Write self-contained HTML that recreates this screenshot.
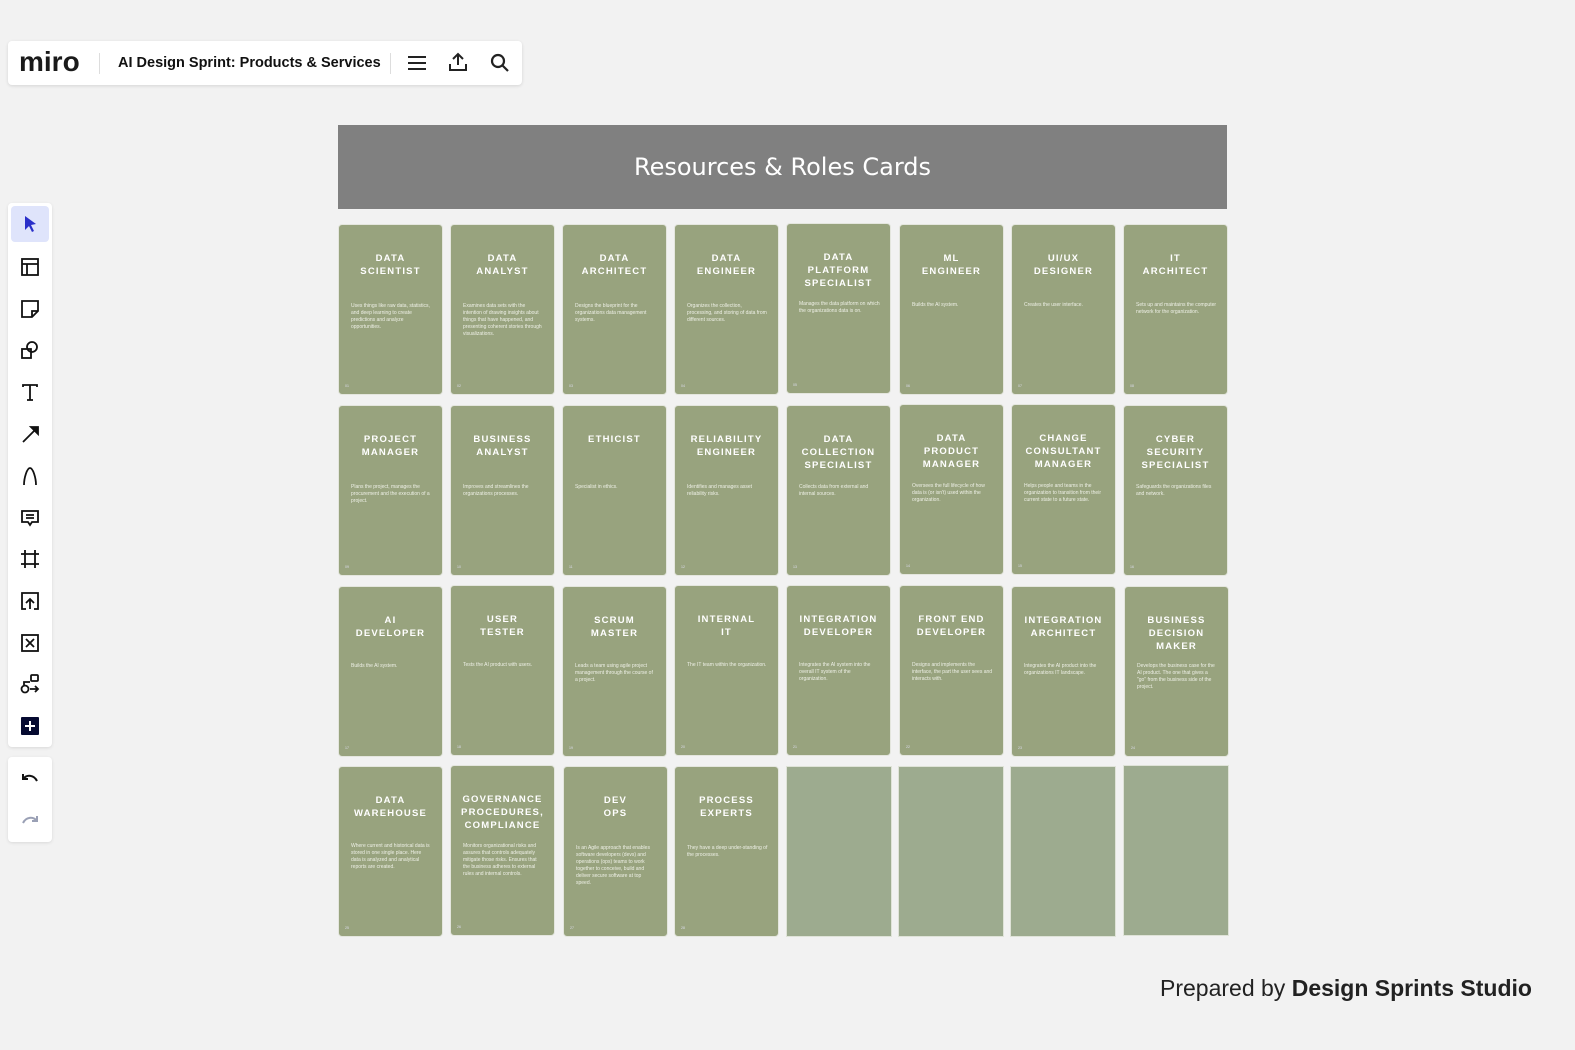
<!DOCTYPE html>
<html><head><meta charset="utf-8"><style>
body{margin:0;width:1575px;height:1050px;background:#f2f2f2;position:relative;overflow:hidden;font-family:"Liberation Sans",sans-serif}
.top{position:absolute;left:8px;top:41px;width:514px;height:44px;background:#fff;border-radius:4px;box-shadow:0 1px 3px rgba(0,0,0,.12)}
.logo{position:absolute;left:11px;top:5px;font-size:28px;font-weight:bold;color:#1a1a1a}
.sep{position:absolute;top:12px;width:1px;height:21px;background:#ddd}
.title{position:absolute;left:110px;top:14px;font-size:14.5px;font-weight:bold;color:#111}
.tb{position:absolute;left:8px;top:203px;width:44px;height:544px;background:#fff;border-radius:4px;box-shadow:0 1px 3px rgba(0,0,0,.1)}
.tb2{position:absolute;left:8px;top:757px;width:44px;height:85px;background:#fff;border-radius:4px;box-shadow:0 1px 3px rgba(0,0,0,.1)}
.ic{position:absolute;left:12px;width:20px;height:20px}
.hdr{position:absolute;left:338px;top:125px;width:889px;height:84px;background:#808080;color:#fff;font-size:24px;text-align:center;line-height:84px;font-family:"DejaVu Sans",sans-serif}
.c{position:absolute;width:105px;height:171px;background:#98a37e;border-radius:4px;border:1px solid #e4e6de;box-sizing:border-box;color:#fff}
.c h{display:block;position:absolute;left:0;right:0;top:27px;text-align:center;font-size:9.5px;font-weight:bold;letter-spacing:1.2px;line-height:13px}
.c p{position:absolute;left:12px;right:10px;margin:0;font-size:5px;line-height:7px;color:#eef0e6}
.c i{position:absolute;left:6px;bottom:6px;font-size:3.5px;font-style:normal;color:#dde}
.e{position:absolute;width:106px;height:171px;background:#9dab8f;border:1px solid #dfe3d8;box-sizing:border-box}
.foot{position:absolute;left:1160px;top:975px;font-size:23px;color:#222;font-family:"Liberation Sans",sans-serif}
</style></head><body>
<div class="top">
<div class="logo">miro</div>
<div class="sep" style="left:91px"></div>
<div class="title">AI Design Sprint: Products &amp; Services</div>
<div class="sep" style="left:382px"></div>
<svg style="position:absolute;left:399px;top:13px" width="20" height="18" viewBox="0 0 20 18"><path d="M1 3h18M1 9h18M1 15h18" stroke="#222" stroke-width="2"/></svg>
<svg style="position:absolute;left:440px;top:11px" width="20" height="20" viewBox="0 0 20 20" fill="none" stroke="#222" stroke-width="2"><path d="M10 13V2M5 7l5-5 5 5M2 12v6h16v-6"/></svg>
<svg style="position:absolute;left:482px;top:12px" width="20" height="20" viewBox="0 0 20 20" fill="none" stroke="#222" stroke-width="2.2"><circle cx="8" cy="8" r="6"/><path d="M12.5 12.5L18 18"/></svg>
</div>

<div class="tb">
<div style="position:absolute;left:3px;top:3px;width:38px;height:36px;background:#dfe4fb;border-radius:4px"></div>
<svg class="ic" style="top:11px" viewBox="0 0 20 20"><path d="M5 2l11 8-5 1 3 6-2 1-3-6-4 4z" fill="#2a2fc9"/></svg>
<svg class="ic" style="top:54px" viewBox="0 0 20 20" fill="none" stroke="#111" stroke-width="1.8"><rect x="2" y="2" width="16" height="16"/><path d="M2 7h16M7 7v11"/></svg>
<svg class="ic" style="top:96px" viewBox="0 0 20 20" fill="none" stroke="#111" stroke-width="1.8"><path d="M2 2h16v10l-6 6H2z M12 18v-6h6"/></svg>
<svg class="ic" style="top:137px" viewBox="0 0 20 20" fill="none" stroke="#111" stroke-width="1.8"><rect x="2" y="9" width="9" height="9"/><circle cx="12" cy="7" r="5"/></svg>
<svg class="ic" style="top:179px" viewBox="0 0 20 20" fill="none" stroke="#111" stroke-width="1.8"><path d="M3 5V3h14v2M10 3v15M7 18h6"/></svg>
<svg class="ic" style="top:221px" viewBox="0 0 20 20" fill="none" stroke="#111" stroke-width="1.8"><path d="M3 18L16 5"/><path d="M11 3h7v7z" fill="#111"/></svg>
<svg class="ic" style="top:263px" viewBox="0 0 20 20" fill="none" stroke="#111" stroke-width="1.8"><path d="M4 19C4 12 7 2 10 2s6 10 6 17" /></svg>
<svg class="ic" style="top:305px" viewBox="0 0 20 20" fill="none" stroke="#111" stroke-width="1.8"><path d="M2 3h16v11h-6l-2 3-2-3H2z M6 7h8M6 10h8"/></svg>
<svg class="ic" style="top:346px" viewBox="0 0 20 20" fill="none" stroke="#111" stroke-width="1.8"><path d="M5 1v18M15 1v18M1 5h18M1 15h18"/></svg>
<svg class="ic" style="top:388px" viewBox="0 0 20 20" fill="none" stroke="#111" stroke-width="1.8"><path d="M6 18H2V2h16v16h-4M10 18V8M6 12l4-4 4 4"/></svg>
<svg class="ic" style="top:430px" viewBox="0 0 20 20" fill="none" stroke="#111" stroke-width="1.8"><rect x="2" y="2" width="16" height="16"/><path d="M6 6l8 8M14 6l-8 8"/></svg>
<svg class="ic" style="top:471px" viewBox="0 0 20 20" fill="none" stroke="#111" stroke-width="1.8"><circle cx="5" cy="15" r="3.5"/><rect x="11" y="1" width="7" height="6" rx="1"/><path d="M10 15h8M15 12l3 3-3 3M4 11V8h6"/></svg>
<svg class="ic" style="top:513px" viewBox="0 0 20 20"><rect x="1" y="1" width="18" height="18" rx="1" fill="#050a30"/><path d="M10 5v10M5 10h10" stroke="#fff" stroke-width="2"/></svg>
</div>
<div class="tb2">
<svg class="ic" style="top:13px" viewBox="0 0 20 20" fill="none" stroke="#111" stroke-width="2"><path d="M3 9c4-5 11-4 14 2M3 4v5h5"/></svg>
<svg class="ic" style="top:55px" viewBox="0 0 20 20" fill="none" stroke="#9aa0b5" stroke-width="2"><path d="M17 9c-4-5-11-4-14 2M17 4v5h-5"/></svg>
</div>

<div class="hdr">Resources &amp; Roles Cards</div>

<div class="c" style="left:338px;top:224px"><h>DATA<br>SCIENTIST</h><p style="top:78px">Uses things like raw data, statistics, and deep learning to create predictions and analyze opportunities.</p><i>01</i></div>
<div class="c" style="left:450px;top:224px"><h>DATA<br>ANALYST</h><p style="top:78px">Examines data sets with the intention of drawing insights about things that have happened, and presenting coherent stories through visualizations.</p><i>02</i></div>
<div class="c" style="left:562px;top:224px"><h>DATA<br>ARCHITECT</h><p style="top:78px">Designs the blueprint for the organizations data management systems.</p><i>03</i></div>
<div class="c" style="left:674px;top:224px"><h>DATA<br>ENGINEER</h><p style="top:78px">Organizes the collection, processing, and storing of data from different sources.</p><i>04</i></div>
<div class="c" style="left:786px;top:223px"><h>DATA<br>PLATFORM<br>SPECIALIST</h><p style="top:77px">Manages the data platform on which the organizations data is on.</p><i>05</i></div>
<div class="c" style="left:899px;top:224px"><h>ML<br>ENGINEER</h><p style="top:77px">Builds the AI system.</p><i>06</i></div>
<div class="c" style="left:1011px;top:224px"><h>UI/UX<br>DESIGNER</h><p style="top:77px">Creates the user interface.</p><i>07</i></div>
<div class="c" style="left:1123px;top:224px"><h>IT<br>ARCHITECT</h><p style="top:77px">Sets up and maintains the computer network for the organization.</p><i>08</i></div>
<div class="c" style="left:338px;top:405px"><h>PROJECT<br>MANAGER</h><p style="top:78px">Plans the project, manages the procurement and the execution of a project.</p><i>09</i></div>
<div class="c" style="left:450px;top:405px"><h>BUSINESS<br>ANALYST</h><p style="top:78px">Improves and streamlines the organizations processes.</p><i>10</i></div>
<div class="c" style="left:562px;top:405px"><h>ETHICIST</h><p style="top:78px">Specialist in ethics.</p><i>11</i></div>
<div class="c" style="left:674px;top:405px"><h>RELIABILITY<br>ENGINEER</h><p style="top:78px">Identifies and manages asset reliability risks.</p><i>12</i></div>
<div class="c" style="left:786px;top:405px"><h>DATA<br>COLLECTION<br>SPECIALIST</h><p style="top:78px">Collects data from external and internal sources.</p><i>13</i></div>
<div class="c" style="left:899px;top:404px"><h>DATA<br>PRODUCT<br>MANAGER</h><p style="top:78px">Oversees the full lifecycle of how data is (or isn't) used within the organization.</p><i>14</i></div>
<div class="c" style="left:1011px;top:404px"><h>CHANGE<br>CONSULTANT<br>MANAGER</h><p style="top:78px">Helps people and teams in the organization to transition from their current state to a future state.</p><i>15</i></div>
<div class="c" style="left:1123px;top:405px"><h>CYBER<br>SECURITY<br>SPECIALIST</h><p style="top:78px">Safeguards the organizations files and network.</p><i>16</i></div>
<div class="c" style="left:338px;top:586px"><h>AI<br>DEVELOPER</h><p style="top:76px">Builds the AI system.</p><i>17</i></div>
<div class="c" style="left:450px;top:585px"><h>USER<br>TESTER</h><p style="top:76px">Tests the AI product with users.</p><i>18</i></div>
<div class="c" style="left:562px;top:586px"><h>SCRUM<br>MASTER</h><p style="top:76px">Leads a team using agile project management through the course of a project.</p><i>19</i></div>
<div class="c" style="left:674px;top:585px"><h>INTERNAL<br>IT</h><p style="top:76px">The IT team within the organization.</p><i>20</i></div>
<div class="c" style="left:786px;top:585px"><h>INTEGRATION<br>DEVELOPER</h><p style="top:76px">Integrates the AI system into the overall IT system of the organization.</p><i>21</i></div>
<div class="c" style="left:899px;top:585px"><h>FRONT END<br>DEVELOPER</h><p style="top:76px">Designs and implements the interface, the part the user sees and interacts with.</p><i>22</i></div>
<div class="c" style="left:1011px;top:586px"><h>INTEGRATION<br>ARCHITECT</h><p style="top:76px">Integrates the AI product into the organizations IT landscape.</p><i>23</i></div>
<div class="c" style="left:1124px;top:586px"><h>BUSINESS<br>DECISION<br>MAKER</h><p style="top:76px">Develops the business case for the AI product. The one that gives a "go" from the business side of the project.</p><i>24</i></div>
<div class="c" style="left:338px;top:766px"><h>DATA<br>WAREHOUSE</h><p style="top:76px">Where current and historical data is stored in one single place. Here data is analyzed and analytical reports are created.</p><i>25</i></div>
<div class="c" style="left:450px;top:765px"><h>GOVERNANCE<br>PROCEDURES,<br>COMPLIANCE</h><p style="top:77px">Monitors organizational risks and assures that controls adequately mitigate those risks. Ensures that the business adheres to external rules and internal controls.</p><i>26</i></div>
<div class="c" style="left:563px;top:766px"><h>DEV<br>OPS</h><p style="top:78px">Is an Agile approach that enables software developers (devs) and operations (ops) teams to work together to conceive, build and deliver secure software at top speed.</p><i>27</i></div>
<div class="c" style="left:674px;top:766px"><h>PROCESS<br>EXPERTS</h><p style="top:78px">They have a deep under-standing of the processes.</p><i>28</i></div>
<div class="e" style="left:786px;top:766px"></div>
<div class="e" style="left:898px;top:766px"></div>
<div class="e" style="left:1010px;top:766px"></div>
<div class="e" style="left:1123px;top:765px"></div>

<div class="foot">Prepared by <b>Design Sprints Studio</b></div>
</body></html>
